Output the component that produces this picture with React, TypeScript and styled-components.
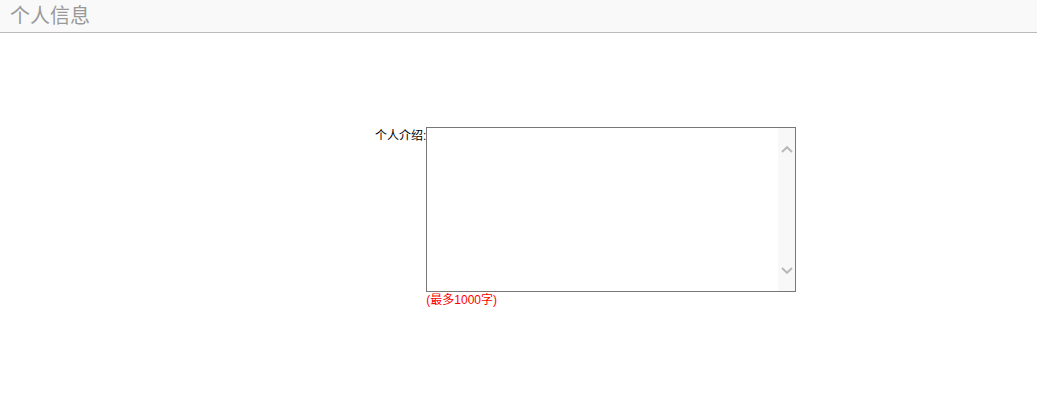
import React from 'react'
import { styled, createGlobalStyle } from 'styled-components'

const GlobalStyle = createGlobalStyle`
  body {
    margin: 0;
    font-family: "Liberation Sans", "Noto Sans CJK SC", sans-serif;
    background: #fff;
  }
`

const Header = styled.div`
  height: 32px;
  background: #f9f9f9;
  border-bottom: 1px solid #bbb;
  display: flex;
  align-items: center;
  padding-left: 10px;
`

const Title = styled.h2`
  margin: 0;
  font-size: 20px;
  font-weight: normal;
  color: #999;
  font-family: "Liberation Sans", "Noto Sans CJK SC", sans-serif;
  line-height: 32px;
`

const Form = styled.div`
  padding-top: 94px;
  padding-left: 375px;
  display: flex;
  align-items: flex-start;
`

const Label = styled.label`
  font-size: 12px;
  color: #000;
  line-height: 16px;
  padding-top: 1px;
  font-family: "Liberation Sans", "Noto Sans CJK SC", sans-serif;
`

const Field = styled.div`
  display: flex;
  flex-direction: column;
`

const Box = styled.div`
  width: 370px;
  height: 165px;
  box-sizing: border-box;
  border: 1px solid #777;
  display: flex;
`

const TextArea = styled.textarea`
  flex: 1;
  border: none;
  margin: 0;
  padding: 2px;
  resize: none;
  overflow: hidden;
  font-size: 12px;
  outline: none;
`

const ScrollTrack = styled.div`
  width: 17px;
  background: #f8f8f8;
  display: flex;
  flex-direction: column;
  justify-content: space-between;
  align-items: center;
  padding: 18px 0 17px;
`

const Chevron = styled.svg`
  width: 12px;
  height: 7px;
  display: block;
`

const Hint = styled.span`
  font-size: 12px;
  color: #f00;
  line-height: 16px;
  font-family: "Liberation Sans", "Noto Sans CJK SC", sans-serif;
`

function Arrow({ dir }: { dir: 'up' | 'down' }) {
  const d = dir === 'up' ? 'M1 6 L6 1.2 L11 6' : 'M1 1 L6 5.8 L11 1'
  return (
    <Chevron viewBox="0 0 12 7">
      <path d={d} fill="none" stroke="#b8b8b8" strokeWidth="2" />
    </Chevron>
  )
}

export default function App() {
  return (
    <>
      <GlobalStyle />
      <Header>
        <Title>个人信息</Title>
      </Header>
      <Form>
        <Label>个人介绍:</Label>
        <Field>
          <Box>
            <TextArea />
            <ScrollTrack>
              <Arrow dir="up" />
              <Arrow dir="down" />
            </ScrollTrack>
          </Box>
          <Hint>(最多1000字)</Hint>
        </Field>
      </Form>
    </>
  )
}
